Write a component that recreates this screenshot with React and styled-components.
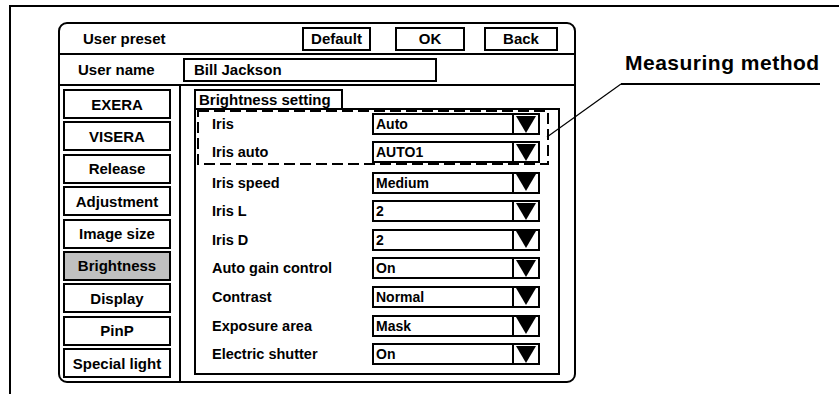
import React from 'react';
import styled, { createGlobalStyle } from 'styled-components';

const GlobalStyle = createGlobalStyle`
  body {
    margin: 0;
    background: #fff;
    font-family: 'Liberation Sans', Arial, sans-serif;
    color: #000;
  }
`;

const Page = styled.div`
  position: relative;
  width: 839px;
  height: 394px;
  overflow: hidden;
`;

const Frame = styled.div`
  box-sizing: border-box;
  height: 389px;
  margin: 5px 0 0 9px;
  padding: 15px 0 0 47px;
  border-top: 2px solid #000;
  border-left: 2px solid #000;
  display: flex;
  align-items: flex-start;
`;

const Panel = styled.section`
  box-sizing: border-box;
  width: 518px;
  height: 361px;
  border: 2px solid #000;
  border-radius: 9px;
  display: flex;
  flex-direction: column;
  font-size: 15px;
  font-weight: 700;
`;

const HeaderRow = styled.div`
  box-sizing: border-box;
  height: 31px;
  display: flex;
  align-items: center;
  border-bottom: 2px solid #000;
`;

const Title = styled.div`
  flex: 1;
  padding-left: 23px;
`;

const HeadButton = styled.button`
  box-sizing: border-box;
  width: ${(p) => p.$w}px;
  height: 24px;
  margin-left: ${(p) => p.$ml || 0}px;
  border: 2px solid #000;
  background: #fff;
  font: inherit;
  color: #000;
  padding: 0;
  &:last-child {
    margin-right: 16px;
  }
`;

const UserRow = styled.div`
  box-sizing: border-box;
  height: 31px;
  display: flex;
  align-items: center;
  border-bottom: 2px solid #000;
`;

const UserLabel = styled.div`
  box-sizing: border-box;
  width: 123px;
  padding-left: 18px;
`;

const NameField = styled.div`
  box-sizing: border-box;
  width: 254px;
  height: 24px;
  border: 2px solid #000;
  padding-left: 9px;
  line-height: 20px;
`;

const Body = styled.div`
  flex: 1;
  display: flex;
`;

const SideNav = styled.nav`
  box-sizing: border-box;
  width: 121px;
  padding: 3px 0 0 3px;
  border-right: 2px solid #000;
  display: flex;
  flex-direction: column;
  gap: 2.4px;
`;

const NavButton = styled.div`
  box-sizing: border-box;
  width: 108px;
  height: 30px;
  border: 2px solid #000;
  background: ${(p) => (p.$active ? '#c0c0c0' : '#fff')};
  display: flex;
  align-items: center;
  justify-content: center;
`;

const Content = styled.div`
  flex: 1;
  padding: 3px 14px 0 13px;
`;

const Tab = styled.div`
  box-sizing: border-box;
  width: 149px;
  height: 19px;
  border: 2px solid #000;
  border-bottom: none;
  padding-left: 3px;
  line-height: 17px;
`;

const SettingsBox = styled.div`
  box-sizing: border-box;
  height: 267px;
  border: 2px solid #000;
  padding: 0 9px 0 1px;
`;

const Rows = styled.div`
  display: flex;
  flex-direction: column;
  gap: 6.6px;
`;

const Group = styled.div`
  position: relative;
  padding: 3px 0 2px;
  display: flex;
  flex-direction: column;
  gap: 6px;
`;

const DashedOutline = styled.svg`
  position: absolute;
  left: 1px;
  top: 1px;
  width: calc(100% - 2px);
  height: calc(100% - 2px);
  overflow: visible;
  pointer-events: none;
`;

const Row = styled.div`
  height: 22px;
  display: flex;
  align-items: center;
  padding: 0 9px 0 15px;
  font-size: 14.5px;
`;

const Label = styled.div`
  width: 160px;
`;

const Select = styled.div`
  box-sizing: border-box;
  width: 168px;
  height: 22px;
  border: 2px solid #000;
  display: flex;
`;

const SelectValue = styled.div`
  flex: 1;
  padding-left: 2px;
  font-size: 14px;
  line-height: 18px;
`;

const SelectArrow = styled.div`
  box-sizing: border-box;
  width: 26px;
  border-left: 2px solid #000;
  display: flex;
  align-items: center;
  justify-content: center;

  &::after {
    content: '';
    border-left: 10px solid transparent;
    border-right: 10px solid transparent;
    border-top: 17px solid #000;
  }
`;

const Callout = styled.div`
  margin: 29px 0 0 45px;
  padding: 0 0 8px 4px;
  border-bottom: 2px solid #000;
  font-size: 21px;
  font-weight: 700;
  letter-spacing: 0.5px;
  line-height: 24px;
  white-space: nowrap;
`;

const Leader = styled.svg`
  position: absolute;
  left: 0;
  top: 0;
  pointer-events: none;
`;

const navItems = [
  'EXERA',
  'VISERA',
  'Release',
  'Adjustment',
  'Image size',
  'Brightness',
  'Display',
  'PinP',
  'Special light',
];

const grouped = [
  ['Iris', 'Auto'],
  ['Iris auto', 'AUTO1'],
];

const settings = [
  ['Iris speed', 'Medium'],
  ['Iris L', '2'],
  ['Iris D', '2'],
  ['Auto gain control', 'On'],
  ['Contrast', 'Normal'],
  ['Exposure area', 'Mask'],
  ['Electric shutter', 'On'],
];

const SettingRow = ({ label, value }) => (
  <Row>
    <Label>{label}</Label>
    <Select>
      <SelectValue>{value}</SelectValue>
      <SelectArrow />
    </Select>
  </Row>
);

const App = () => (
  <Page>
    <GlobalStyle />
    <Frame>
      <Panel>
        <HeaderRow>
          <Title>User preset</Title>
          <HeadButton $w={69}>Default</HeadButton>
          <HeadButton $w={70} $ml={24}>OK</HeadButton>
          <HeadButton $w={74} $ml={19}>Back</HeadButton>
        </HeaderRow>
        <UserRow>
          <UserLabel>User name</UserLabel>
          <NameField>Bill Jackson</NameField>
        </UserRow>
        <Body>
          <SideNav>
            {navItems.map((item) => (
              <NavButton key={item} $active={item === 'Brightness'}>
                {item}
              </NavButton>
            ))}
          </SideNav>
          <Content>
            <Tab>Brightness setting</Tab>
            <SettingsBox>
              <Rows>
                <Group>
                  <DashedOutline>
                    <rect
                      x="0"
                      y="0"
                      width="100%"
                      height="100%"
                      fill="none"
                      stroke="#000"
                      strokeWidth="2"
                      strokeDasharray="11 5"
                    />
                  </DashedOutline>
                  {grouped.map(([label, value]) => (
                    <SettingRow key={label} label={label} value={value} />
                  ))}
                </Group>
                {settings.map(([label, value]) => (
                  <SettingRow key={label} label={label} value={value} />
                ))}
              </Rows>
            </SettingsBox>
          </Content>
        </Body>
      </Panel>
      <Callout>Measuring method</Callout>
    </Frame>
    <Leader width="839" height="394" viewBox="0 0 839 394">
      <line x1="621" y1="84" x2="547" y2="137" stroke="#000" strokeWidth="1.2" />
    </Leader>
  </Page>
);

export default App;
